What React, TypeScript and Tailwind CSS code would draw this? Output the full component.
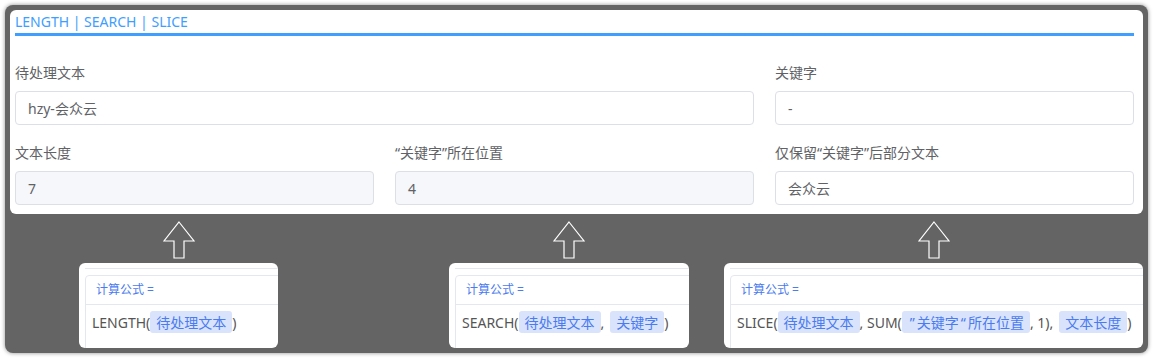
import React from "react";

// Text-function demo: LENGTH / SEARCH / SLICE fields with the formula cards below.

const FONT = { fontFamily: '"Noto Sans", "Noto Sans CJK SC", sans-serif' };

type Field = {
  label: string;
  value: string;
  disabled?: boolean;
  wide?: boolean;
};

const fields: Field[] = [
  { label: "待处理文本", value: "hzy-会众云", wide: true },
  { label: "关键字", value: "-" },
  { label: "文本长度", value: "7", disabled: true },
  { label: "\u201C关键字\u201D所在位置", value: "4", disabled: true },
  { label: "仅保留\u201C关键字\u201D后部分文本", value: "会众云" },
];

function Tag({ children }: { children: React.ReactNode }) {
  return (
    <span
      className="inline-flex h-[22px] items-center rounded-[3px] bg-[#d9e3fc] px-[6px] text-[#4a7bef]"
      style={{ fontFamily: '"Noto Sans CJK SC", sans-serif' }}
    >
      {children}
    </span>
  );
}

function Quote({ children }: { children: string }) {
  return (
    <span className="px-[2px]" style={{ fontFamily: '"Noto Sans", sans-serif' }}>
      {children}
    </span>
  );
}

function UpArrow() {
  return (
    <svg width="32" height="38" viewBox="0 0 32 38" fill="none">
      <path
        d="M16 1 L31 20 L21 20 L21 37 L11 37 L11 20 L1 20 Z"
        stroke="#ffffff"
        strokeWidth="1.2"
        strokeLinejoin="miter"
      />
    </svg>
  );
}

function FormulaCard({
  width,
  children,
}: {
  width: string;
  children: React.ReactNode;
}) {
  return (
    <div className={`mt-[4px] h-[85px] overflow-hidden rounded-md bg-white ${width}`}>
      <div className="ml-[6px] mt-[5px] border-t border-[#e4e7ed] pt-[6px]">
        <div className="h-[120px] w-[1000px] rounded-tl-[4px] border border-[#e4e7ed]">
          <div className="flex h-[29px] items-center border-b border-[#e4e7ed] pl-[10px] text-[12px] text-[#4a7bef]">
            计算公式 =
          </div>
          <div className="flex items-center pl-[6px] pt-[6px] text-[14px] text-[#555555]">
            {children}
          </div>
        </div>
      </div>
    </div>
  );
}

export default function App() {
  return (
    <div className="h-[358px] w-[1154px] bg-white p-[5px]" style={FONT}>
      <div className="h-[348px] w-[1143px] rounded-lg bg-[#646464] p-[5px] shadow-[0_0_4px_rgba(0,0,0,0.45)]">
        {/* top form card */}
        <div className="h-[204px] rounded-md bg-white pl-[5px] pr-[9px]">
          <div className="border-b-[3px] border-[#409eff] pt-[2px] pb-[1px] text-[14px] leading-[20px] text-[#409eff]">
            LENGTH | SEARCH | SLICE
          </div>
          <div className="mt-[27px] grid grid-cols-3 gap-x-[21px] gap-y-[18px]">
            {fields.map((f) => (
              <div key={f.label} className={f.wide ? "col-span-2" : ""}>
                <div className="mb-[8px] text-[14px] leading-[20px] text-[#606266]">
                  {f.label}
                </div>
                <div
                  className={`flex h-[34px] items-center rounded-[4px] border border-[#dcdfe6] px-[12px] text-[14px] text-[#606266] ${
                    f.disabled ? "bg-[#f5f7fa]" : "bg-white"
                  }`}
                >
                  {f.value}
                </div>
              </div>
            ))}
          </div>
        </div>

        {/* formula cards */}
        <div className="mt-[7px] flex">
          <div className="ml-[69px] flex flex-col items-center">
            <UpArrow />
            <FormulaCard width="w-[199px]">
              LENGTH(<Tag>待处理文本</Tag>)
            </FormulaCard>
          </div>
          <div className="ml-[171px] flex flex-col items-center">
            <UpArrow />
            <FormulaCard width="w-[240px]">
              SEARCH(<Tag>待处理文本</Tag>
              <span className="mr-[6px]">,</span>
              <Tag>关键字</Tag>)
            </FormulaCard>
          </div>
          <div className="ml-[35px] flex flex-col items-center">
            <UpArrow />
            <FormulaCard width="w-[419px]">
              SLICE(<Tag>待处理文本</Tag>, SUM(
              <Tag>
                <Quote>{"\u201D"}</Quote>关键字<Quote>{"\u201C"}</Quote>所在位置
              </Tag>
              <span className="mr-[6px] whitespace-pre">, 1),</span>
              <Tag>文本长度</Tag>)
            </FormulaCard>
          </div>
        </div>
      </div>
    </div>
  );
}
